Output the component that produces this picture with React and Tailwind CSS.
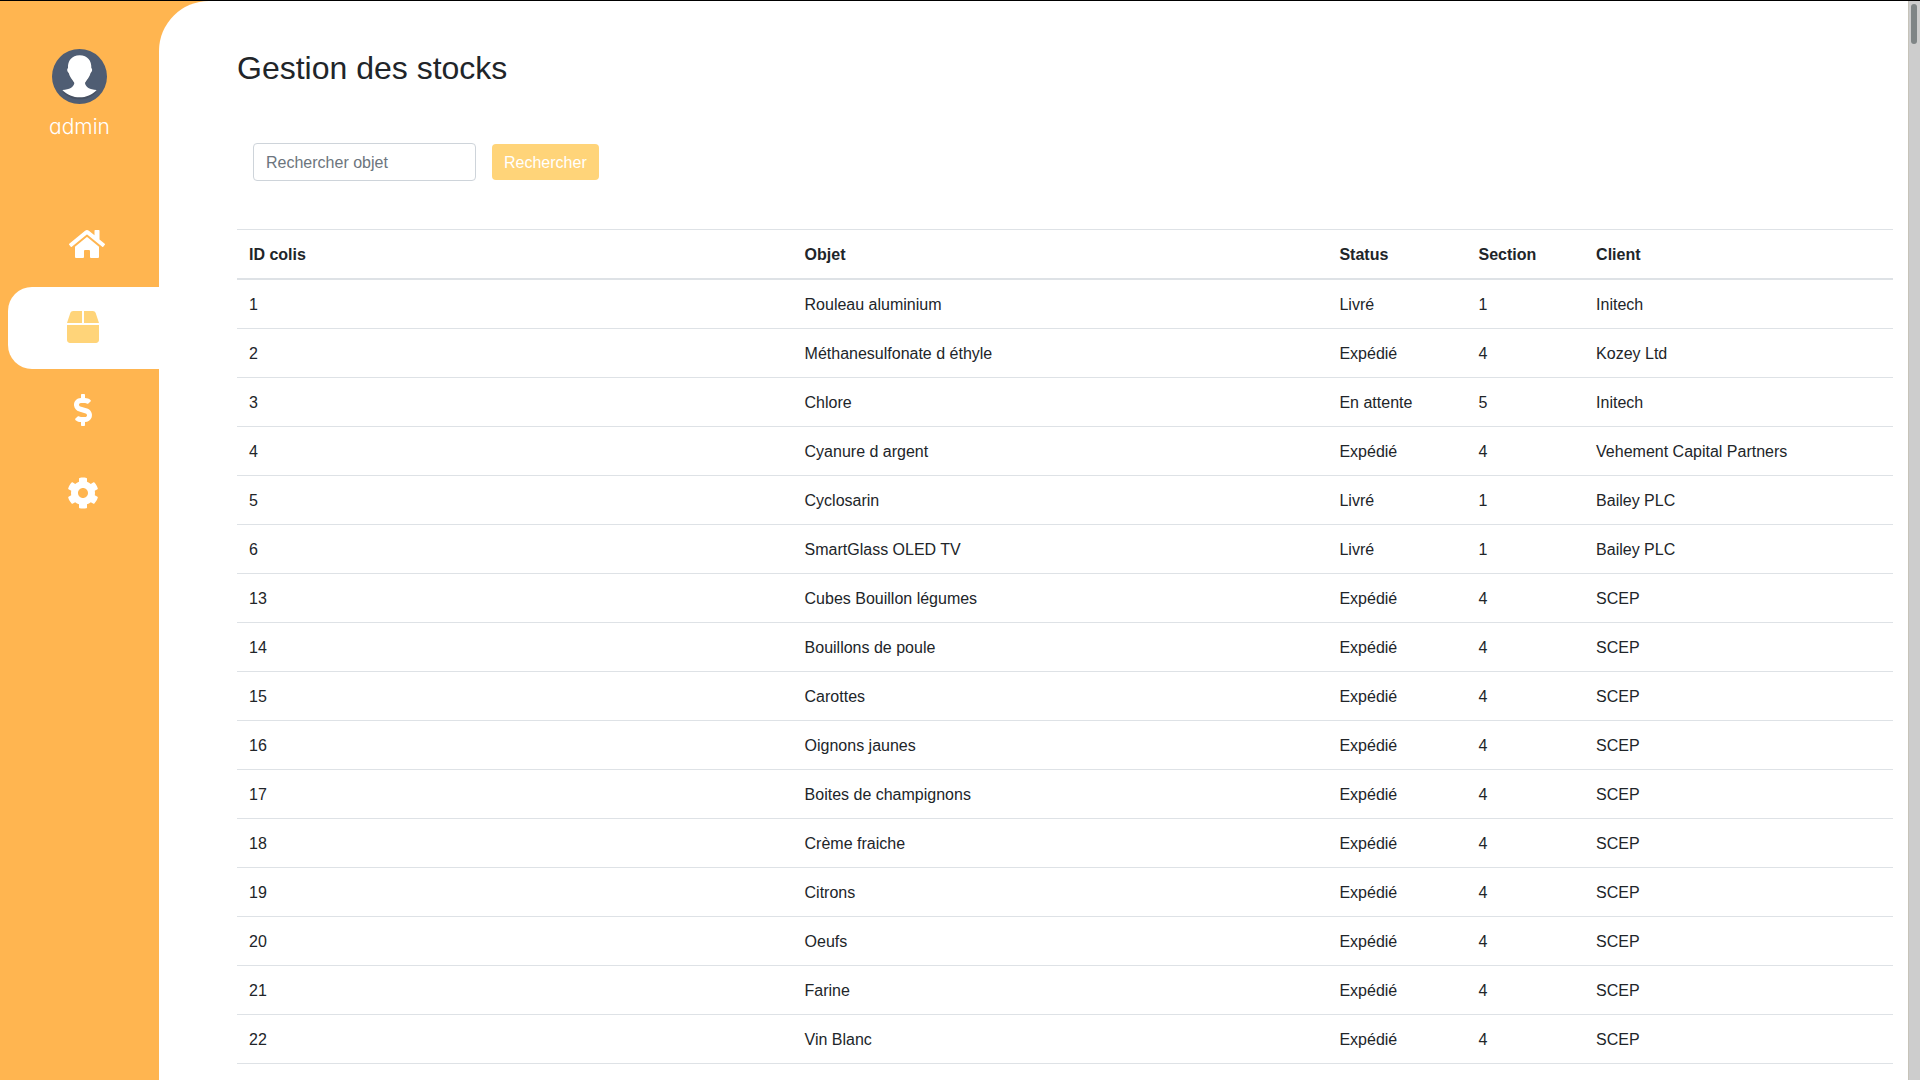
import { FaHome, FaBox, FaDollarSign, FaCog } from "react-icons/fa";

const packages = [
  [1, "Rouleau aluminium", "Livré", 1, "Initech"],
  [2, "Méthanesulfonate d éthyle", "Expédié", 4, "Kozey Ltd"],
  [3, "Chlore", "En attente", 5, "Initech"],
  [4, "Cyanure d argent", "Expédié", 4, "Vehement Capital Partners"],
  [5, "Cyclosarin", "Livré", 1, "Bailey PLC"],
  [6, "SmartGlass OLED TV", "Livré", 1, "Bailey PLC"],
  [13, "Cubes Bouillon légumes", "Expédié", 4, "SCEP"],
  [14, "Bouillons de poule", "Expédié", 4, "SCEP"],
  [15, "Carottes", "Expédié", 4, "SCEP"],
  [16, "Oignons jaunes", "Expédié", 4, "SCEP"],
  [17, "Boites de champignons", "Expédié", 4, "SCEP"],
  [18, "Crème fraiche", "Expédié", 4, "SCEP"],
  [19, "Citrons", "Expédié", 4, "SCEP"],
  [20, "Oeufs", "Expédié", 4, "SCEP"],
  [21, "Farine", "Expédié", 4, "SCEP"],
  [22, "Vin Blanc", "Expédié", 4, "SCEP"],
];

const columns = [
  { label: "ID colis", width: "w-[33.55%]" },
  { label: "Objet", width: "w-[32.3%]" },
  { label: "Status", width: "w-[8.4%]" },
  { label: "Section", width: "w-[7.1%]" },
  { label: "Client", width: "w-auto" },
];

const links = [
  { label: "Accueil", Icon: FaHome, size: "h-8 w-9", pad: "pl-[61px]" },
  { label: "Stocks", Icon: FaBox, size: "size-8", pad: "pl-[59px]", active: true },
  { label: "Finances", Icon: FaDollarSign, size: "size-8", pad: "pl-[59px]" },
  { label: "Paramètres", Icon: FaCog, size: "size-8", pad: "pl-[59px]" },
];

function Avatar() {
  return (
    <svg viewBox="0 0 165 165" className="size-[55px]" aria-hidden="true">
      <circle cx="82.5" cy="82.5" r="82.5" fill="#4f5d73" />
      <path
        d="M83 25C59 25 48 43 49 62C45 65 46 72 51 76C54 88 61 95 66 104C65 119 53 127 31 128C46 144 64 151 83 151C102 151 120 144 134 128C113 127 101 119 100 104C105 95 112 88 115 76C120 72 121 65 117 62C118 43 107 25 83 25Z"
        fill="#231f20"
        opacity="0.2"
      />
      <path
        d="M83 19C59 19 47 36 48 57C44 60 45 68 50 72C53 84 61 92 67 102C65 115 53 122 31 123C46 138 64 145 83 145C102 145 120 138 134 123C113 122 101 115 99 102C105 92 113 84 116 72C121 68 122 60 118 57C119 36 107 19 83 19Z"
        fill="#fff"
      />
    </svg>
  );
}

function Sidebar() {
  return (
    <aside className="flex w-[159px] shrink-0 flex-col pt-12">
      <div className="flex flex-col items-center">
        <Avatar />
        <p className="mt-2 pt-px font-['Inter',sans-serif] text-[21px] leading-7 font-light text-white [font-feature-settings:'cv11']">
          admin
        </p>
      </div>
      <nav className="mt-[63px] flex flex-col gap-px pl-2">
        {links.map(({ label, Icon, size, pad, active }) => (
          <a
            key={label}
            href="#"
            aria-label={label}
            aria-current={active ? "page" : undefined}
            className={`flex h-[82px] items-center rounded-l-3xl pb-[3px] ${pad} ${
              active ? "bg-white text-[#ffd479]" : "text-white"
            }`}
          >
            <Icon className={size} />
          </a>
        ))}
      </nav>
    </aside>
  );
}

function SearchForm() {
  return (
    <form className="mt-14 flex items-center gap-4 px-4" onSubmit={(e) => e.preventDefault()}>
      <input
        type="search"
        aria-label="Rechercher objet"
        placeholder="Rechercher objet"
        className="h-[38px] w-[223px] rounded border border-[#ced4da] bg-white px-3 pt-0.5 placeholder:text-[#6c757d]"
      />
      <button type="submit" className="h-9 rounded bg-[#ffd479] px-3 pt-0.5 text-white">
        Rechercher
      </button>
    </form>
  );
}

function StockTable() {
  return (
    <table className="mt-12 w-full table-fixed border-separate border-spacing-0 text-left">
      <thead>
        <tr>
          {columns.map(({ label, width }) => (
            <th
              key={label}
              scope="col"
              className={`${width} border-t border-b-2 border-[#dee2e6] px-3 pt-[13px] pb-[11px] font-bold`}
            >
              {label}
            </th>
          ))}
        </tr>
      </thead>
      <tbody>
        {packages.map((row) => (
          <tr key={row[0]}>
            {row.map((value, i) => (
              <td key={columns[i].label} className="border-b border-[#dee2e6] px-3 pt-[13px] pb-[11px]">
                {value}
              </td>
            ))}
          </tr>
        ))}
      </tbody>
    </table>
  );
}

export default function App() {
  return (
    <div className="flex min-h-screen border-t border-black bg-[#ffb550] font-['Liberation_Sans',Arial,sans-serif] text-base text-[#212529]">
      <Sidebar />
      <main className="min-w-0 grow rounded-tl-[50px] bg-white pt-12 pr-[15px] pl-[78px]">
        <h1 className="text-[32px] leading-[38px]">Gestion des stocks</h1>
        <SearchForm />
        <StockTable />
      </main>
      <div className="w-3 shrink-0 border-l border-[#c6c3b9] bg-[#cdcdcd] pt-[3px]" aria-hidden="true">
        <div className="ml-0.5 h-10 w-1.5 rounded-full bg-[#7f8586]" />
      </div>
    </div>
  );
}
